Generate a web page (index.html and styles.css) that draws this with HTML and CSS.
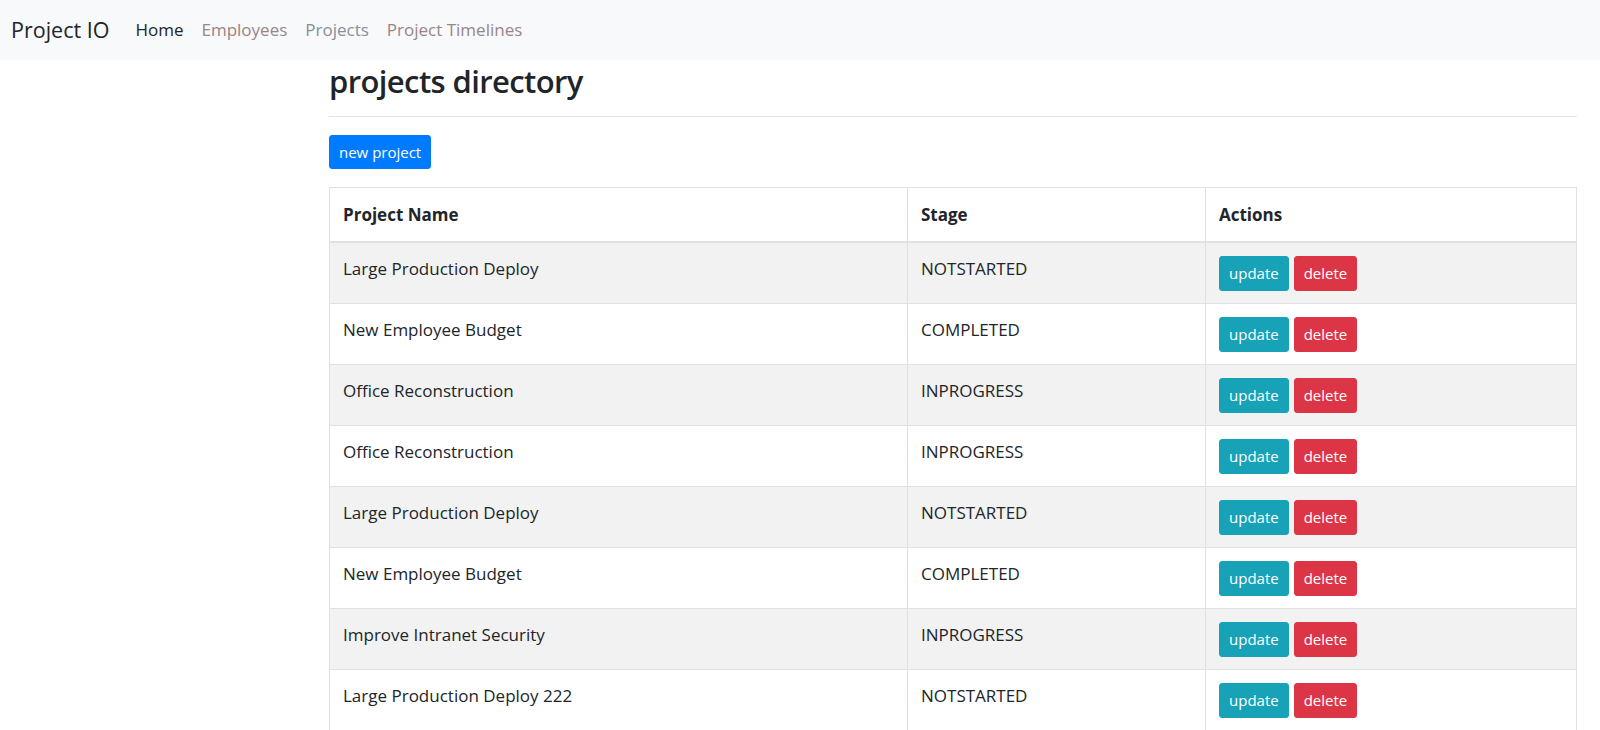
FILE: index.html
```html
<!DOCTYPE html>
<html lang="en">
<head>
<meta charset="utf-8">
<title>Project IO</title>
<link rel="stylesheet" href="styles.css">
</head>
<body>
<nav class="navbar">
  <a class="brand" href="#">Project IO</a>
  <ul class="nav-links">
    <li><a class="nav-link active" href="#">Home</a></li>
    <li><a class="nav-link warm" href="#">Employees</a></li>
    <li><a class="nav-link cool" href="#">Projects</a></li>
    <li><a class="nav-link warm" href="#">Project Timelines</a></li>
  </ul>
</nav>
<main class="content">
  <h2 class="page-title">projects directory</h2>
  <hr class="divider">
  <button class="btn btn-primary">new project</button>
  <table class="table">
    <colgroup>
      <col class="col-name">
      <col class="col-stage">
      <col class="col-actions">
    </colgroup>
    <thead>
      <tr><th>Project Name</th><th>Stage</th><th>Actions</th></tr>
    </thead>
    <tbody>
      <tr><td>Large Production Deploy</td><td>NOTSTARTED</td><td><button class="btn btn-info">update</button><button class="btn btn-danger">delete</button></td></tr>
      <tr><td>New Employee Budget</td><td>COMPLETED</td><td><button class="btn btn-info">update</button><button class="btn btn-danger">delete</button></td></tr>
      <tr><td>Office Reconstruction</td><td>INPROGRESS</td><td><button class="btn btn-info">update</button><button class="btn btn-danger">delete</button></td></tr>
      <tr><td>Office Reconstruction</td><td>INPROGRESS</td><td><button class="btn btn-info">update</button><button class="btn btn-danger">delete</button></td></tr>
      <tr><td>Large Production Deploy</td><td>NOTSTARTED</td><td><button class="btn btn-info">update</button><button class="btn btn-danger">delete</button></td></tr>
      <tr><td>New Employee Budget</td><td>COMPLETED</td><td><button class="btn btn-info">update</button><button class="btn btn-danger">delete</button></td></tr>
      <tr><td>Improve Intranet Security</td><td>INPROGRESS</td><td><button class="btn btn-info">update</button><button class="btn btn-danger">delete</button></td></tr>
      <tr><td>Large Production Deploy 222</td><td>NOTSTARTED</td><td><button class="btn btn-info">update</button><button class="btn btn-danger">delete</button></td></tr>
    </tbody>
  </table>
</main>
</body>
</html>
```

FILE: styles.css
```css
* { box-sizing: border-box; }

body {
  margin: 0;
  font-family: "Open Sans", "Noto Sans", sans-serif;
  font-size: 17px;
  line-height: 1.5;
  color: #212529;
  background: #fff;
}

.navbar {
  height: 60px;
  background: #f8f9fa;
  display: flex;
  align-items: center;
  padding: 0 11px;
}

.brand {
  font-size: 21.5px;
  color: #212529;
  text-decoration: none;
  margin-right: 26px;
}

.nav-links {
  list-style: none;
  margin: 0;
  padding: 0;
  display: flex;
  gap: 18px;
}

.nav-link {
  text-decoration: none;
  font-size: 17px;
}

.nav-link.active { color: #212529; }
.nav-link.warm { color: #988586; }
.nav-link.cool { color: #85909c; }

.content {
  padding: 0 23px 0 329px;
}

.page-title {
  margin: 0;
  padding-top: 2px;
  font-size: 31px;
  font-weight: 600;
  letter-spacing: -0.6px;
  line-height: 38px;
}

.divider {
  margin: 16px 0 18px;
  border: 0;
  border-top: 1px solid #e3e4e6;
}

.btn {
  display: inline-block;
  vertical-align: top;
  font-family: inherit;
  font-size: 15px;
  line-height: 21px;
  padding: 6px 9px;
  border: 1px solid transparent;
  border-radius: 3px;
  color: #fff;
  cursor: pointer;
}

.btn-primary {
  background: #007bff;
  border-color: #007bff;
  height: 34px;
}

.btn-info {
  background: #17a2b8;
  border-color: #17a2b8;
  height: 35px;
  margin-right: 5px;
}

.btn-danger {
  background: #dc3545;
  border-color: #dc3545;
  height: 35px;
}

.table {
  margin-top: 18px;
  width: 100%;
  border-collapse: collapse;
  table-layout: fixed;
  border: 1px solid #dee2e6;
}

.col-name { width: 578px; }
.col-stage { width: 298px; }

.table th,
.table td {
  border: 1px solid #dee2e6;
  padding: 13px 13px 12px;
  text-align: left;
  vertical-align: top;
}

.table th {
  height: 54px;
  font-weight: 700;
  vertical-align: middle;
  border-bottom: 2px solid #dee2e6;
}

.table tbody tr:nth-child(odd) {
  background: #f2f2f2;
}
```
